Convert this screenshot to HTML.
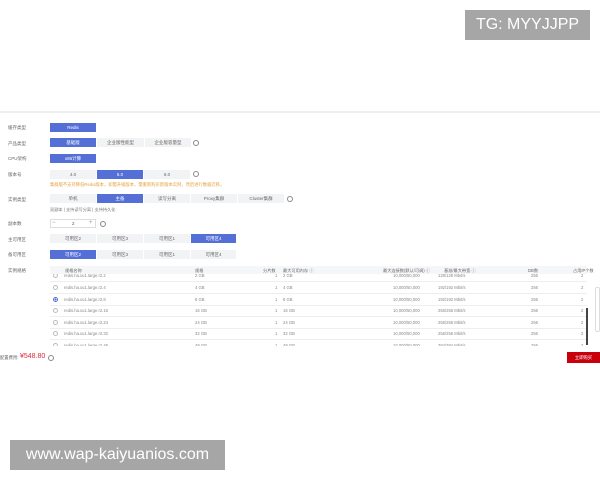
<!DOCTYPE html>
<html><head><meta charset="utf-8"><style>
*{margin:0;padding:0;box-sizing:border-box}
body{width:600px;height:480px;background:#fff;position:relative;overflow:hidden;font-family:"Liberation Sans","Noto Sans CJK SC",sans-serif;color:#555}
.a{position:absolute;white-space:nowrap}
.lb{position:absolute;left:8px;font-size:4.5px;color:#666}
.b{position:absolute;height:9px;background:#f2f3f5;font-size:4.5px;color:#666;text-align:center;line-height:9px}
.b.on{background:#5470d6;color:#fff}
.q{position:absolute;width:6px;height:6px;border:0.7px solid #888;border-radius:50%}
.th{position:absolute;font-size:4.2px;color:#666}
.td{position:absolute;font-size:4.2px;color:#888}
</style></head><body>
<div class="a" style="left:465px;top:10px;width:125px;height:30px;background:#a6a6a6;color:#fff;font-size:16px;line-height:30px;text-align:center">TG: MYYJJPP</div>
<div class="a" style="left:0;top:111px;width:600px;height:2px;background:#eee"></div>

<div class="lb" style="top:125px">缓存类型</div>
<div class="b on" style="left:50px;top:123px;width:46px">Redis</div>
<div class="lb" style="top:141px">产品类型</div>
<div class="b on" style="left:50px;top:138px;width:46px">基础版</div>
<div class="b" style="left:97px;top:138px;width:47px">企业版性能型</div>
<div class="b" style="left:145px;top:138px;width:46px">企业版容量型</div>
<div class="q" style="left:193px;top:139.5px"></div>
<div class="lb" style="top:156px">CPU架构</div>
<div class="b on" style="left:50px;top:154px;width:46px">x86计算</div>
<div class="lb" style="top:172px">版本号</div>
<div class="b" style="left:50px;top:170px;width:46px">4.0</div>
<div class="b on" style="left:97px;top:170px;width:46px">5.0</div>
<div class="b" style="left:144px;top:170px;width:46px">6.0</div>
<div class="q" style="left:193px;top:171px"></div>
<div class="a" style="left:50px;top:182px;font-size:4.3px;color:#e6a23c">集群版不支持降低Redis版本，如需升级版本，需重新购买新版本实例，然后进行数据迁移。</div>
<div class="lb" style="top:197px">实例类型</div>
<div class="b" style="left:50px;top:194px;width:46px">单机</div>
<div class="b on" style="left:97px;top:194px;width:46px">主备</div>
<div class="b" style="left:144px;top:194px;width:46px">读写分离</div>
<div class="b" style="left:191px;top:194px;width:46px">Proxy集群</div>
<div class="b" style="left:238px;top:194px;width:46px">Cluster集群</div>
<div class="q" style="left:287px;top:195.5px"></div>
<div class="a" style="left:50px;top:207px;font-size:4.2px;color:#777">双副本 | 支持读写分离 | 支持持久化</div>
<div class="lb" style="top:221px">副本数</div>
<div class="a" style="left:50px;top:219px;width:46px;height:9px;border:0.6px solid #ddd"></div>
<div class="a" style="left:52px;top:219px;font-size:6px;color:#999;line-height:9px">−</div>
<div class="a" style="left:72px;top:219px;font-size:4.5px;line-height:9px">2</div>
<div class="a" style="left:89px;top:219px;font-size:6px;color:#999;line-height:9px">+</div>
<div class="q" style="left:100px;top:220.5px"></div>
<div class="lb" style="top:237px">主可用区</div>
<div class="b" style="left:50px;top:234px;width:46px">可用区2</div>
<div class="b" style="left:97px;top:234px;width:46px">可用区3</div>
<div class="b" style="left:144px;top:234px;width:46px">可用区1</div>
<div class="b on" style="left:191px;top:234px;width:45px">可用区4</div>
<div class="lb" style="top:252px">备可用区</div>
<div class="b on" style="left:50px;top:250px;width:46px">可用区2</div>
<div class="b" style="left:97px;top:250px;width:46px">可用区3</div>
<div class="b" style="left:144px;top:250px;width:46px">可用区1</div>
<div class="b" style="left:191px;top:250px;width:45px">可用区4</div>

<div class="lb" style="top:268px">实例规格</div>
<div id="rows"></div>
<script>
var r=[["2.2","2 GB","128/128"],["2.4","4 GB","192/192"],["2.8","8 GB","192/192"],["2.16","16 GB","256/256"],["2.24","24 GB","256/256"],["2.32","32 GB","256/256"],["2.48","48 GB","384/384"]];
var h="";var ys=[275,287,299,310.5,322,333.5,345];
for(var i=0;i<7;i++){var y=ys[i];var c=i==2;
h+='<div class="a" style="left:50px;top:'+(y+5.5)+'px;width:537px;height:0.6px;background:#eee"></div>';
h+='<div class="a" style="left:53px;top:'+(y-2.5)+'px;width:5px;height:5px;border-radius:50%;border:0.6px solid '+(c?'#5470d6':'#bbb')+';'+(c?'background:radial-gradient(#5470d6 40%,#fff 45%)':'')+'"></div>';
var t=y-2.5;
h+='<div class="td" style="left:64px;top:'+t+'px">redis.ha.xu1.large.r'+r[i][0]+'</div>';
h+='<div class="td" style="left:195px;top:'+t+'px">'+r[i][1]+'</div>';
h+='<div class="td" style="left:275px;top:'+t+'px">1</div>';
h+='<div class="td" style="left:283px;top:'+t+'px">'+r[i][1]+'</div>';
h+='<div class="td" style="left:393px;top:'+t+'px">10,000/50,000</div>';
h+='<div class="td" style="left:438px;top:'+t+'px">'+r[i][2]+' Mbit/s</div>';
h+='<div class="td" style="left:531px;top:'+t+'px">256</div>';
h+='<div class="td" style="left:581px;top:'+t+'px">2</div>';}
document.getElementById('rows').innerHTML=h;
</script>
<div class="a" style="left:50px;top:266px;width:537px;height:8px;background:#f5f6f8"></div>
<div class="th" style="left:65px;top:268px">规格名称</div>
<div class="th" style="left:195px;top:268px">规格</div>
<div class="th" style="left:263px;top:268px">分片数</div>
<div class="th" style="left:283px;top:268px">最大可用内存 ⓘ</div>
<div class="th" style="left:383px;top:268px">最大连接数(默认/可调) ⓘ</div>
<div class="th" style="left:444px;top:268px">基准/最大带宽 ⓘ</div>
<div class="th" style="left:528px;top:268px">DB数</div>
<div class="th" style="left:573px;top:268px">占用IP个数</div>
<div class="a" style="left:0;top:346px;width:600px;height:6px;background:#fff"></div>
<div class="a" style="left:586px;top:308px;width:1.5px;height:37px;background:#444"></div>
<div class="a" style="left:595px;top:287px;width:5px;height:45px;border:0.6px solid #ddd;border-radius:2px;background:#fff"></div>
<div class="a" style="left:0;top:355px;font-size:4.3px;color:#666">配置费用:</div>
<div class="a" style="left:20px;top:353px;font-size:7px;color:#e0293b">¥548.80</div>
<div class="q" style="left:48px;top:354.5px"></div>
<div class="a" style="left:567px;top:352px;width:33px;height:11px;background:#c7000b;color:#fff;font-size:4.3px;line-height:11px;text-align:center">立即购买</div>

<div class="a" style="left:10px;top:440px;width:215px;height:30px;background:#a6a6a6;color:#fff;font-size:16px;line-height:30px;text-align:center">www.wap-kaiyuanios.com</div>
</body></html>
